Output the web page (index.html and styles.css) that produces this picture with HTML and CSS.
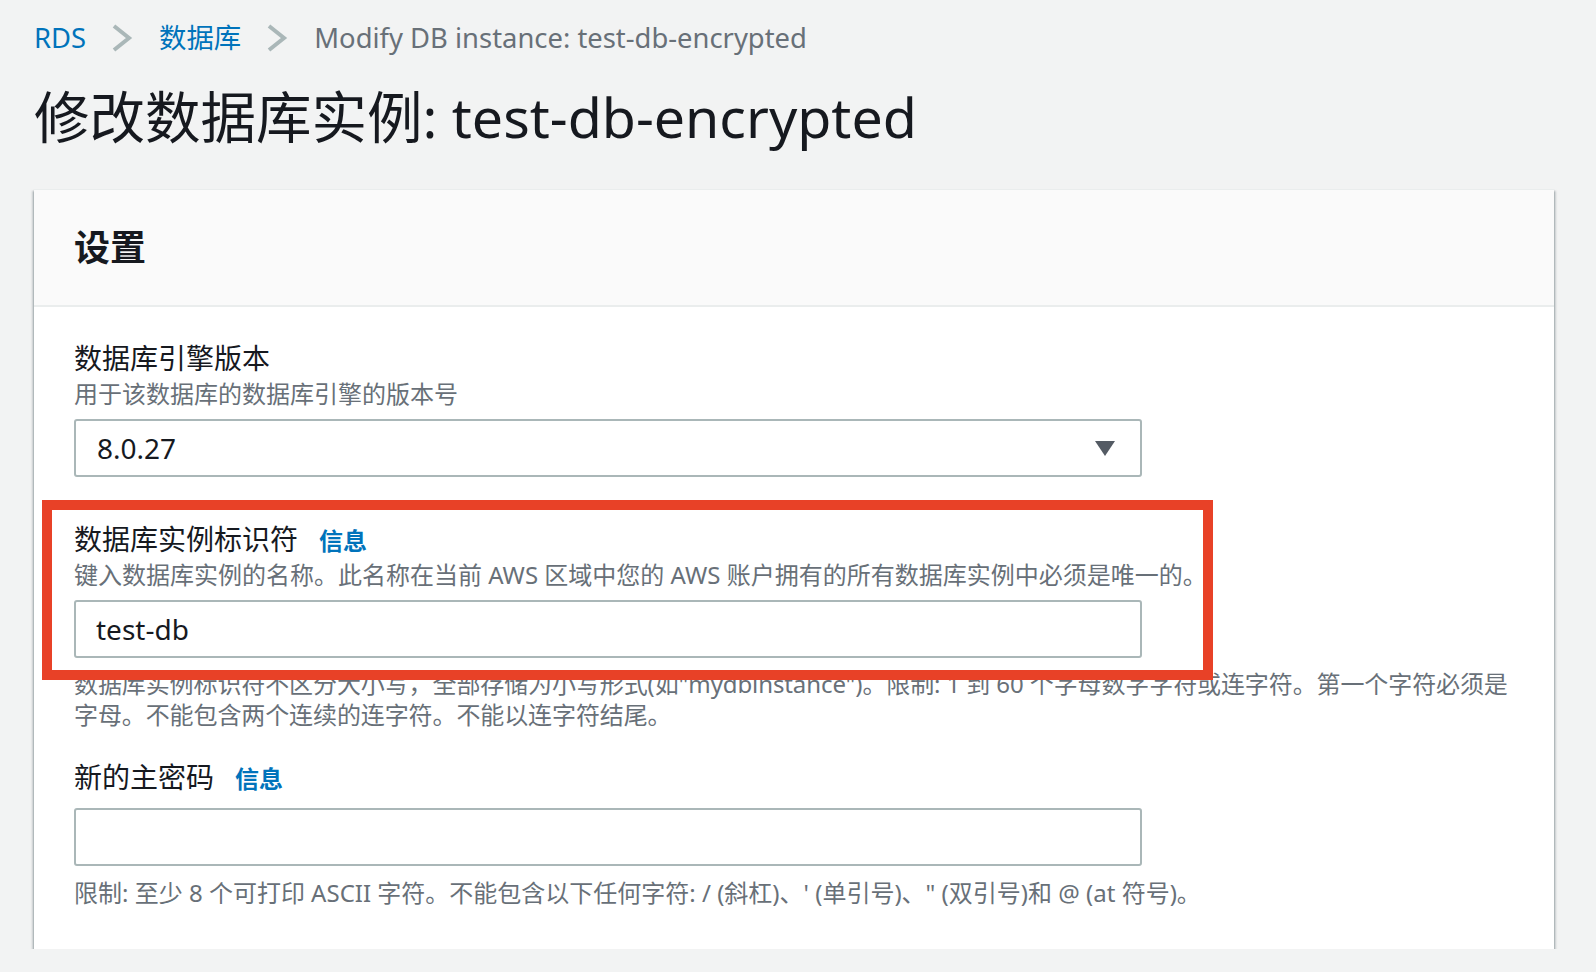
FILE: index.html
```html
<!DOCTYPE html>
<html lang="zh-CN">
<head>
<meta charset="utf-8">
<title>修改数据库实例: test-db-encrypted</title>
<link rel="stylesheet" href="styles.css">
</head>
<body>
<div class="page">
  <nav class="breadcrumbs">
    <a class="crumb-link" href="#">RDS</a>
    <svg class="chev" width="22" height="28" viewBox="0 0 22 28"><polyline points="3,2 18,14 3,26" fill="none" stroke="#aab7b8" stroke-width="4"/></svg>
    <a class="crumb-link" href="#">数据库</a>
    <svg class="chev" width="22" height="28" viewBox="0 0 22 28"><polyline points="3,2 18,14 3,26" fill="none" stroke="#aab7b8" stroke-width="4"/></svg>
    <span class="crumb-current">Modify DB instance: test-db-encrypted</span>
  </nav>

  <h1 class="page-title">修改数据库实例: test-db-encrypted</h1>

  <section class="card">
    <div class="card-header">
      <h2 class="card-title">设置</h2>
    </div>
    <div class="card-body">
      <div class="field">
        <div class="label-row"><span class="label">数据库引擎版本</span></div>
        <div class="desc">用于该数据库的数据库引擎的版本号</div>
        <div class="select">
          <span class="select-value">8.0.27</span>
          <svg class="caret" width="20" height="15" viewBox="0 0 20 15"><polygon points="0,0 20,0 10,15" fill="#545b64"/></svg>
        </div>
      </div>

      <div class="field field-id">
        <div class="highlight"></div>
        <div class="label-row"><span class="label">数据库实例标识符</span><a class="info" href="#">信息</a></div>
        <div class="desc">键入数据库实例的名称。此名称在当前 AWS 区域中您的 AWS 账户拥有的所有数据库实例中必须是唯一的。</div>
        <input class="input" type="text" value="test-db">
        <div class="hint hint-id">数据库实例标识符不区分大小写，全部存储为小写形式(如"mydbinstance")。限制: 1 到 60 个字母数字字符或连字符。第一个字符必须是字母。不能包含两个连续的连字符。不能以连字符结尾。</div>
      </div>

      <div class="field field-pw">
        <div class="label-row"><span class="label">新的主密码</span><a class="info" href="#">信息</a></div>
        <input class="input input-pw" type="password" value="">
        <div class="hint hint-pw">限制: 至少 8 个可打印 ASCII 字符。不能包含以下任何字符: / (斜杠)、' (单引号)、" (双引号)和 @ (at 符号)。</div>
      </div>
    </div>
  </section>
</div>
</body>
</html>
```

FILE: styles.css
```css
* {
  box-sizing: border-box;
}

html, body {
  margin: 0;
  padding: 0;
  background: #f2f3f3;
}

body {
  font-family: "Noto Sans", "Noto Sans CJK SC", sans-serif;
  color: #16191f;
}

.page {
  padding: 18px 42px 0 34px;
}

/* Breadcrumbs */
.breadcrumbs {
  display: flex;
  align-items: center;
  font-size: 27.4px;
  line-height: 40px;
  height: 40px;
}

.crumb-link {
  color: #0073bb;
  text-decoration: none;
}

.crumb-current {
  color: #687078;
}

.chev {
  display: block;
  margin: 0 26px 0 25px;
  flex: none;
}

/* Title */
.page-title {
  margin: 27px 0 0 0;
  font-size: 55.5px;
  line-height: 64px;
  font-weight: 400;
  color: #16191f;
}

/* Card */
.card {
  margin-top: 40px;
  background: #ffffff;
  border-top: 1px solid #eaeded;
  box-shadow: 0 2px 2px 0 rgba(0, 28, 36, 0.45),
              2px 2px 2px 0 rgba(0, 28, 36, 0.15),
              -2px 2px 2px 0 rgba(0, 28, 36, 0.15);
}

.card-header {
  background: #fafafa;
  padding: 35.5px 40px;
  border-bottom: 2px solid #eaeded;
}

.card-title {
  margin: 0;
  font-size: 36px;
  line-height: 44px;
  font-weight: 700;
  color: #16191f;
}

.card-body {
  padding: 33px 40px 40.5px 40px;
}

/* Fields */
.field + .field {
  margin-top: 44px;
}

.field-id {
  position: relative;
}

.field.field-pw {
  margin-top: 29px;
}

.label-row {
  display: flex;
  align-items: baseline;
  line-height: 37px;
  height: 37px;
}

.label {
  font-size: 28px;
  color: #16191f;
}

.info {
  margin-left: 21px;
  font-size: 24px;
  font-weight: 700;
  color: #0073bb;
  text-decoration: none;
}

.desc {
  font-size: 24px;
  line-height: 34px;
  color: #687078;
}

.select,
.input {
  display: flex;
  align-items: center;
  width: 1068px;
  height: 58px;
  margin-top: 8px;
  border: 2px solid #aab7b8;
  border-radius: 3px;
  background: #ffffff;
  font-family: "Noto Sans", "Noto Sans CJK SC", sans-serif;
  font-size: 28px;
  color: #16191f;
}

.select {
  justify-content: space-between;
  padding: 0 25px 0 21px;
}

.select-value {
  line-height: 1;
}

.caret {
  display: block;
}

.input {
  padding: 0 20px;
  outline: none;
}

.input-pw {
  margin-top: 12px;
}

.hint {
  margin-top: 11px;
  font-size: 24px;
  line-height: 30.5px;
  color: #687078;
}

.hint-id {
  letter-spacing: -0.1px;
}

.hint-pw {
  margin-top: 12px;
}

/* Red annotation box drawn over the field */
.highlight {
  position: absolute;
  top: -21px;
  left: -32px;
  width: 1171px;
  height: 180px;
  border: 10px solid #e84127;
  z-index: 2;
  pointer-events: none;
}
```
